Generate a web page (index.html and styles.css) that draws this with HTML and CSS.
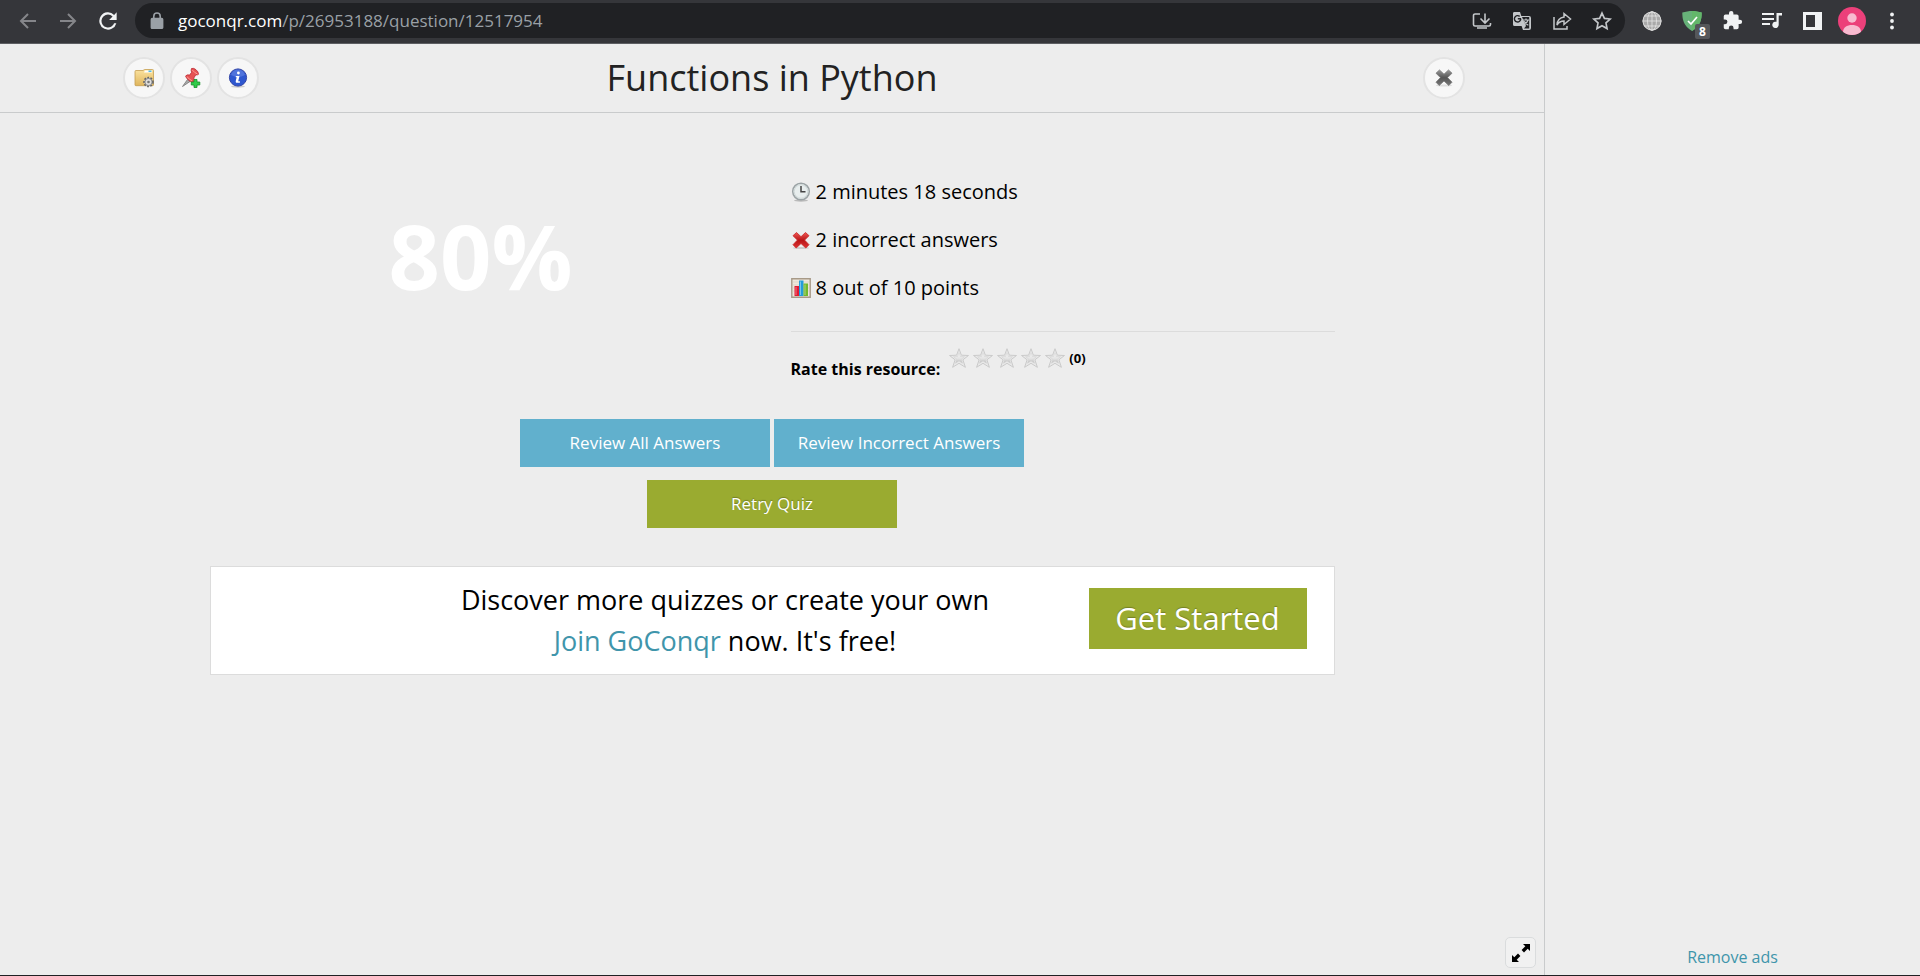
FILE: index.html
```html
<!DOCTYPE html>
<html lang="en">
<head>
<meta charset="utf-8">
<meta name="viewport" content="width=device-width, initial-scale=1">
<title>Functions in Python</title>
<link rel="stylesheet" href="styles.css">
</head>
<body>
<div class="browser-bar">
  <nav class="nav-buttons" aria-label="Browser">
    <button class="tool dim" aria-label="Back"><svg width="24" height="24" viewBox="0 0 24 24" fill="none" stroke="currentColor" stroke-width="2"><path d="M20 12H5M12 5l-7 7 7 7"/></svg></button>
    <button class="tool dim" aria-label="Forward"><svg width="24" height="24" viewBox="0 0 24 24" fill="none" stroke="currentColor" stroke-width="2"><path d="M4 12h15M12 5l7 7-7 7"/></svg></button>
    <button class="tool bright" aria-label="Reload"><svg width="26" height="26" viewBox="0 0 24 24" fill="currentColor"><path d="M17.65 6.35A8 8 0 1 0 19.73 14h-2.08A6 6 0 1 1 12 6c1.66 0 3.14.69 4.22 1.78L13 11h7V4z"/></svg></button>
  </nav>
  <div class="address">
    <svg class="lock" width="16" height="18" viewBox="2 1 20 22" fill="currentColor"><path d="M18 8h-1V6A5 5 0 0 0 7 6v2H6a2 2 0 0 0-2 2v10c0 1.100.9 2 2 2h12a2 2 0 0 0 2-2V10a2 2 0 0 0-2-2zM9 8V6a3 3 0 0 1 6 0v2z"/></svg>
    <span class="url"><span class="host">goconqr.com</span>/p/26953188/question/12517954</span>
    <div class="address-tools">
      <button class="tool" aria-label="Install"><svg width="20" height="20" viewBox="0 0 20 20" fill="none" stroke="currentColor" stroke-width="1.600"><path d="M8 3H3a1.500 1.500 0 0 0-1.500 1.500v9A1.500 1.500 0 0 0 3 15h14a1.500 1.500 0 0 0 1.500-1.500V12M13 2.500v9M8.500 7.500L13 12l4.500-4.500M5 17h10"/></svg></button>
      <button class="tool" aria-label="Translate"><svg width="20" height="20" viewBox="0 0 20 20"><path d="M2 1h6l1.300 4H17a2 2 0 0 1 2 2v10a2 2 0 0 1-2 2h-6l-1.400-4H2.500A1.500 1.500 0 0 1 1 13.500V2.500A1.500 1.500 0 0 1 2 1z" fill="currentColor"/><path d="M10 6h7.200v11.500H12l2-2.500z" fill="#202124"/><path d="M9 7.700H5.800M8.800 7.800A3.200 3.200 0 1 1 7.700 5.400" fill="none" stroke="#202124" stroke-width="1.400"/><path d="M11 9h6M14 7.500V9M16 9c-.5 2-2.200 3.700-4 4.600M12.300 10.200c.8 1.700 2.100 3 4 4" fill="none" stroke="currentColor" stroke-width="1.200"/></svg></button>
      <button class="tool" aria-label="Share"><svg width="20" height="20" viewBox="0 0 20 20" fill="none" stroke="currentColor" stroke-width="1.500"><path d="M2 6v12h13v-3"/><path d="M12 6V2.500L18.500 8 12 13.500V10c-3 0-5.200 1-7 4 .3-4.500 2.700-7.400 7-8z"/></svg></button>
      <button class="tool" aria-label="Bookmark"><svg width="22" height="22" viewBox="0 0 20 20" fill="none" stroke="currentColor" stroke-width="1.500"><path d="M10 2.800l2.200 4.800 5.200.6-3.800 3.500 1 5.200L10 14.300l-4.600 2.600 1-5.200-3.800-3.500 5.200-.6z"/></svg></button>
    </div>
  </div>
  <div class="extensions">
    <button class="tool" aria-label="Globe"><svg width="20" height="20" viewBox="0 0 20 20"><circle cx="10" cy="10" r="9.500" fill="#a9a9a9"/><g fill="none" stroke="#e4e4e4" stroke-width=".8"><circle cx="10" cy="10" r="9"/><ellipse cx="10" cy="10" rx="4.500" ry="9.500"/><path d="M10 .5v19M.5 10h19M2 5h16M2 15h16"/></g></svg></button>
    <button class="tool shield" aria-label="Blocker, 8 blocked"><svg width="20" height="22" viewBox="0 0 20 22"><path d="M10 1c3 0 6.500.5 9.700 1.600 0 7-1.200 13.400-9.700 18.400C1.500 16 .3 9.600.3 2.600 3.500 1.500 7 1 10 1z" fill="#67b279"/><path d="M10 1c3 0 6.500.5 9.700 1.600 0 7-1.200 13.400-9.700 18.400z" fill="#63b76a"/><path d="M6 11l3 3 6-7" fill="none" stroke="#fff" stroke-width="1.700"/></svg><span class="count">8</span></button>
    <button class="tool bright" aria-label="Extensions"><svg width="21" height="21" viewBox="0 0 24 24" fill="currentColor"><path d="M20.500 11H19V7a2 2 0 0 0-2-2h-4V3.500a2.500 2.500 0 0 0-5 0V5H4a2 2 0 0 0-2 2v3.800h1.500a2.700 2.700 0 0 1 0 5.400H2V20c0 1.100.9 2 2 2h3.800v-1.500a2.700 2.700 0 0 1 5.400 0V22H17a2 2 0 0 0 2-2v-4h1.500a2.500 2.500 0 0 0 0-5z"/></svg></button>
    <button class="tool bright" aria-label="Media"><svg width="20" height="18" viewBox="0 0 20 18"><path d="M0 2h12M0 7h12M0 12h8" stroke="currentColor" stroke-width="2"/><path d="M14.500 1H20v2.500h-3.300v9.300a3.200 3.200 0 1 1-2.200-3z" fill="currentColor"/></svg></button>
    <button class="tool bright" aria-label="Side panel"><svg width="19" height="18" viewBox="0 0 19 18"><path d="M0 0h19v18H0zM3 3v12h9V3z" fill="currentColor" fill-rule="evenodd"/></svg></button>
    <button class="tool" aria-label="Profile"><svg width="28" height="28" viewBox="0 0 28 28"><defs><clipPath id="face"><circle cx="14" cy="14" r="14"/></clipPath></defs><circle cx="14" cy="14" r="14" fill="#ec407a"/><g fill="#f8bbd0" clip-path="url(#face)"><circle cx="14" cy="11" r="4.700"/><path d="M5 25c0-4.500 4-7 9-7s9 2.500 9 7v3H5z"/></g></svg></button>
    <button class="tool bright" aria-label="Menu"><svg width="6" height="18" viewBox="0 0 6 18" fill="currentColor"><circle cx="3" cy="2.500" r="1.900"/><circle cx="3" cy="9" r="1.900"/><circle cx="3" cy="15.500" r="1.900"/></svg></button>
  </div>
</div>
<div class="page">
  <div class="player">
    <header class="player-header">
      <div class="actions">
        <button class="round" aria-label="Folder settings"><svg width="22" height="22" viewBox="0 0 22 22"><defs><linearGradient id="fold" x2="0" y2="1"><stop stop-color="#fbe3a0"/><stop offset="1" stop-color="#dfb55c"/></linearGradient></defs><path d="M2 4.500Q2 3.500 3 3.500h7l1.500-1h8q1 0 1 1V18q0 .7-1 .7H3q-1 0-1-.7z" fill="url(#fold)" stroke="#c49d50" stroke-width=".8"/><path d="M12 3.500h7v2h-8z" fill="#fff"/><path d="M15.500 3.600h3v1.200h-3z" fill="#27a9e0"/><circle cx="15.500" cy="15" r="4.300" fill="#d8d8d8" stroke="#666" stroke-width="2" stroke-dasharray="1.700 1.400"/><circle cx="15.500" cy="15" r="3.600" fill="#ddd" stroke="#777" stroke-width=".8"/><circle cx="15.500" cy="15" r="1.300" fill="#777"/></svg></button>
        <button class="round" aria-label="Pin"><svg width="22" height="22" viewBox="0 0 22 22"><path d="M2.500 19.500l5-7 2.500 2z" fill="#aaa" stroke="#777" stroke-width=".8"/><path d="M11.500 1.500q2-.8 4.500 1.200t2.500 4.600q-1.200 1-2.700.5l-2 3.200q1.200 2.500-.8 4.300-2 0-4.500-2.200T5.600 9q1.400-1.700 4-.9l2-2.800q-.9-2-.1-3.800z" fill="#e65353" stroke="#bd2932" stroke-width=".8"/><path d="M12.300 3q2.400 3 5.200 4M7 9.500q2 3 5 4.200" fill="none" stroke="#ff9a96"/><path d="M14 12.500h3V15h2.800v3H17v2.500h-3V18h-2.700v-3H14z" fill="#31cb4a" stroke="#16902a" stroke-width=".8"/></svg></button>
        <button class="round" aria-label="Information"><svg width="22" height="22" viewBox="0 0 22 22"><ellipse cx="11" cy="19.500" rx="7" ry="1.200" fill="#ccc"/><circle cx="11" cy="10.500" r="8.600" fill="#2e57cf" stroke="#3446a8"/><path d="M4 8a7.300 7.300 0 0 1 14 0q-7 4-14 0z" fill="#6686e5" opacity=".6"/><circle cx="11.400" cy="6" r="1.400" fill="#fff"/><path d="M8.800 9h3.700l-1.300 5.300h1.700v1.400H9.200q-.8-.7-.4-2L9.700 10.300h-.9z" fill="#fff"/></svg></button>
      </div>
      <h1 class="title">Functions in Python</h1>
      <button class="round close" aria-label="Close"><svg width="20" height="20" viewBox="0 0 20 20"><defs><linearGradient id="cross" x2="0" y2="1"><stop stop-color="#999"/><stop offset=".5" stop-color="#555"/><stop offset="1" stop-color="#777"/></linearGradient></defs><ellipse cx="10" cy="17.500" rx="8" ry="1" fill="#ddd"/><path d="M5.500 2L10 6.200 14.500 2 18 5.200 13.600 9.600 18 14.200 14.800 17.500 10 13 5.200 17.500 2 14.200 6.400 9.600 2 5.200z" fill="url(#cross)" stroke="#777" stroke-linejoin="round" stroke-width=".8"/></svg></button>
    </header>
    <main class="content">
      <section class="result">
        <p class="score">80%</p>
        <div class="details">
          <ul class="stats">
            <li><svg width="20" height="20" viewBox="0 0 20 20"><ellipse cx="10" cy="18.500" rx="7" ry="1.200" fill="#bbb"/><circle cx="10" cy="9.500" r="8.300" fill="#e8eeee" stroke="#9ba3a5" stroke-width="1.500"/><circle cx="10" cy="9.500" r="6.800" fill="none" stroke="#cfd8d8"/><path d="M10 4v5.800h4.500" fill="none" stroke="#444" stroke-width="1.500"/></svg>2 minutes 18 seconds</li>
            <li><svg width="20" height="20" viewBox="0 0 20 20"><defs><linearGradient id="wrong" x2="0" y2="1"><stop stop-color="#ef5753"/><stop offset=".5" stop-color="#b91517"/><stop offset="1" stop-color="#dc3333"/></linearGradient></defs><ellipse cx="10" cy="18" rx="8" ry="1" fill="#ccc"/><path d="M5.500 2.500L10 6.700l4.500-4.200L18 5.700l-4.400 4.400 4.400 4.600-3.200 3.300-4.800-4.500L5.200 18 2 14.700l4.400-4.600L2 5.700z" fill="url(#wrong)" stroke="#c22" stroke-linejoin="round" stroke-width=".8"/></svg>2 incorrect answers</li>
            <li><svg width="20" height="20" viewBox="0 0 20 20"><path d="M.8.8h18.400v18.400H.8z" fill="#eee7db" stroke="#a79a88" stroke-width="1.400"/><path d="M2 4h16M2 7h16M2 10h16M2 13h16" stroke="#d9d0c3" stroke-width=".7"/><path d="M3.500 8H8v10H3.500z" fill="#e21b32"/><path d="M8 2.500h4.500V18H8z" fill="#239cdb"/><path d="M12.500 5.500H17V18h-4.500z" fill="#72b92d"/><path d="M5 9v8M9.500 3.500V17M14 6.500V17" stroke="#fff" opacity=".4"/></svg>8 out of 10 points</li>
          </ul>
          <div class="rating">
            <span class="rating-label" id="rate">Rate this resource:</span>
            <div class="stars" role="radiogroup" aria-labelledby="rate">
              <svg class="defs" width="0" height="0"><defs><linearGradient id="silver" x2="0" y2="1"><stop stop-color="#f7f7f7"/><stop offset=".6" stop-color="#e2e2e2"/><stop offset="1" stop-color="#b8b8b8"/></linearGradient><symbol id="star" viewBox="0 0 20 20"><path d="M10 .7l2.400 6.500 7.100.3-5.600 4.300 2.500 7.500L10 15.300l-6.400 4 2.500-7.500L.5 7.500l7.100-.3z" fill="#e9e9e9" stroke="#cacaca"/><path d="M10 4.500l1.500 4 4 .2-3.200 2.500 1.200 4-3.500-2.200-3.500 2.200 1.200-4-3.200-2.500 4-.2z" fill="url(#silver)" stroke="#d4d4d4" stroke-width=".6"/></symbol></defs></svg>
              <label class="star"><input type="radio" name="stars" aria-label="1 star"><svg width="20" height="20"><use href="#star"/></svg></label>
              <label class="star"><input type="radio" name="stars" aria-label="2 stars"><svg width="20" height="20"><use href="#star"/></svg></label>
              <label class="star"><input type="radio" name="stars" aria-label="3 stars"><svg width="20" height="20"><use href="#star"/></svg></label>
              <label class="star"><input type="radio" name="stars" aria-label="4 stars"><svg width="20" height="20"><use href="#star"/></svg></label>
              <label class="star"><input type="radio" name="stars" aria-label="5 stars"><svg width="20" height="20"><use href="#star"/></svg></label>
              <span class="votes">(0)</span>
            </div>
          </div>
        </div>
      </section>
      <div class="review">
        <button class="btn blue">Review All Answers</button>
        <button class="btn blue">Review Incorrect Answers</button>
      </div>
      <div class="retry"><button class="btn green">Retry Quiz</button></div>
      <section class="join">
        <p class="join-text">Discover more quizzes or create your own<br><a href="#">Join GoConqr</a> now. It's free!</p>
        <button class="btn green large">Get Started</button>
      </section>
    </main>
    <footer class="player-footer">
      <button class="expand" aria-label="Full screen"><svg width="18" height="18" viewBox="0 0 18 18" fill="#000"><path d="M18 0v7l-2.300-2.300-3.700 3.700L9.600 6l3.700-3.700L11 0zM0 18v-7l2.300 2.300L6 9.600 8.400 12l-3.700 3.700L7 18z"/></svg></button>
    </footer>
  </div>
  <aside class="ads"><a href="#">Remove ads</a></aside>
</div>
</body>
</html>
```
FILE: styles.css
```css
* { box-sizing: border-box; }

body {
  margin: 0;
  min-height: 100vh;
  display: flex;
  flex-direction: column;
  background: #ededed;
  color: #000;
  font-family: "Open Sans", "Liberation Sans", sans-serif;
  font-size: 16px;
  border-bottom: 1px solid #202124;
}

button { font: inherit; border: 0; padding: 0; cursor: pointer; }
svg { display: block; flex: none; }
a { color: #3f95ab; text-decoration: none; }
p, h1, ul { margin: 0; padding: 0; }

.browser-bar {
  display: flex;
  align-items: center;
  height: 44px;
  padding: 0 8px 2px;
  background: #35363a;
  border-bottom: 1px solid #5d5e62;
}
.nav-buttons, .address-tools, .extensions { display: flex; align-items: center; }
.tool {
  display: flex;
  align-items: center;
  justify-content: center;
  width: 40px;
  height: 34px;
  background: none;
  color: #c4c7ca;
}
.dim { color: #85868a; }
.bright { color: #f1f3f4; }
.address {
  display: flex;
  align-items: center;
  flex: 1;
  height: 35px;
  margin: 0 7px;
  padding: 0 3px 0 14px;
  border-radius: 18px;
  background: #202124;
}
.lock { color: #9aa0a6; }
.url { flex: 1; margin-left: 13px; font-size: 17px; line-height: 24px; color: #9aa0a6; }
.host { color: #fff; }
.shield { position: relative; }
.count {
  position: absolute;
  right: 2px;
  bottom: -1px;
  width: 15px;
  border-radius: 2px;
  background: #55575a;
  color: #fff;
  font-size: 12px;
  font-weight: 700;
  line-height: 15px;
}

.page { display: flex; flex: 1; }
.player { display: flex; flex-direction: column; flex: 1; }
.player-header {
  display: grid;
  grid-template-columns: 1fr auto 1fr;
  align-items: center;
  height: 69px;
  padding: 0 79px;
  border-bottom: 1px solid #c9cbcc;
}
.actions { display: flex; gap: 5px; padding-left: 44px; }
.round {
  display: flex;
  align-items: center;
  justify-content: center;
  width: 42px;
  height: 42px;
  border: 2px solid #e3e3e3;
  border-radius: 50%;
  background: #f7f7f7;
}
.close { justify-self: end; }
.title { color: #222; font-size: 36px; font-weight: 400; line-height: 52px; }

.content { width: 73%; max-width: 1125px; margin: 0 auto; padding-top: 56px; }
.result { display: grid; grid-template-columns: 542px 1fr; column-gap: 39px; }
.score {
  color: #fff;
  font-size: 90px;
  font-weight: 700;
  line-height: 120px;
  padding-top: 26px;
  text-align: center;
}
.stats {
  display: grid;
  gap: 18px;
  padding: 8px 0 28px;
  border-bottom: 1px solid #dcdcdc;
  list-style: none;
  font-size: 20px;
  line-height: 30px;
}
.stats li { display: flex; align-items: center; gap: 5px; }
.rating { display: flex; align-items: flex-start; gap: 9px; padding-top: 16px; }
.rating-label { padding-top: 9px; font-weight: 700; line-height: 24px; }
.stars { display: flex; align-items: center; gap: 4px; }
.defs { position: absolute; }
.star { position: relative; cursor: pointer; }
.star input { position: absolute; inset: 0; margin: 0; opacity: 0; }
.votes { font-size: 13px; font-weight: 700; line-height: 20px; }

.review, .retry { display: flex; justify-content: center; gap: 4px; }
.review { padding-top: 38px; }
.retry { padding-top: 13px; }
.btn {
  width: 250px;
  height: 48px;
  color: #fff;
  font-size: 17px;
  line-height: 24px;
}
.blue { background: #61b0cd; }
.green { background: #9aab30; text-shadow: 0 -1px 1px rgba(0, 0, 0, 0.25); }
.large { width: 218px; height: 61px; margin-bottom: 4px; font-size: 31px; line-height: 44px; }
.join {
  display: flex;
  align-items: center;
  margin-top: 38px;
  padding: 12px 27px 13px;
  border: 1px solid #dcdcdc;
  background: #fff;
}
.join-text { flex: 1; padding-left: 124px; text-align: center; font-size: 27px; line-height: 41px; }

.player-footer { display: flex; justify-content: flex-end; margin-top: auto; padding: 7px 8px; }
.expand {
  display: flex;
  align-items: center;
  justify-content: center;
  width: 31px;
  height: 31px;
  border: 1px solid #dadcdd;
  border-radius: 5px;
  background: #f1f1f1;
}
.ads {
  display: flex;
  align-items: flex-end;
  justify-content: center;
  width: 376px;
  padding-bottom: 6px;
  border-left: 1px solid #c9cbcc;
  line-height: 24px;
}
```
